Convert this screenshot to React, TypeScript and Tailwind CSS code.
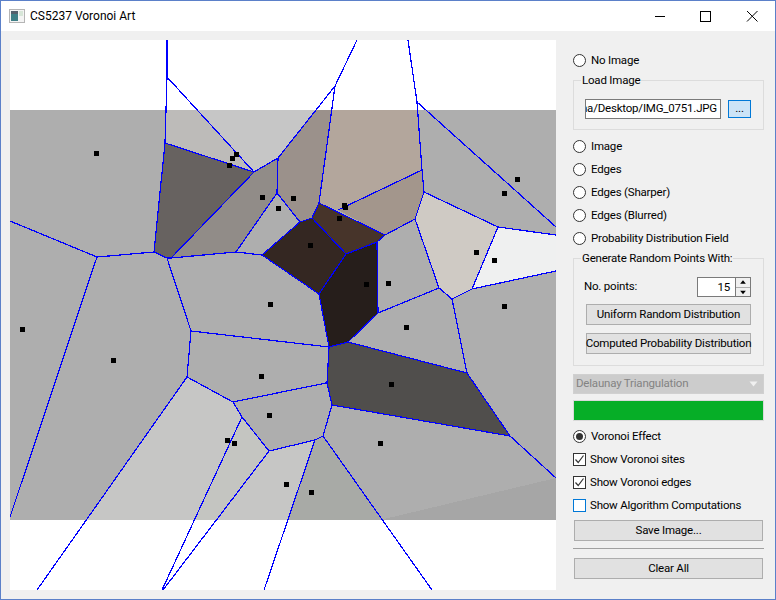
import React from 'react';

// All canvas coordinates are in window pixels; the svg viewBox is offset to match.
type Cell = { fill: string; pts: string };

const cells: Cell[] = [
  { fill: '#bdbbb9', pts: '167,77 165,143 254,172' },
  { fill: '#c6c6c6', pts: '167,77 254,172 278,158 335,86 335,40 167,40' },
  { fill: '#676260', pts: '165,143 254,172 171,258 167,258 154,252' },
  { fill: '#918c88', pts: '254,172 278,158 277,193 236,252 171,258' },
  { fill: '#9b918b', pts: '335,86 278,158 277,193 300,222 312,218 319,203' },
  { fill: '#b3a69c', pts: '335,86 417,102 422,170 338,210 319,203' },
  { fill: '#a3968c', pts: '338,210 422,170 424,192 415,219 385,235' },
  { fill: '#47342a', pts: '319,203 385,235 377,242 346,254 312,218' },
  { fill: '#342722', pts: '300,222 312,218 346,254 319,294 262,255' },
  { fill: '#261e1b', pts: '346,254 377,242 378,313 348,342 329,347 319,294' },
  { fill: '#cfcac4', pts: '424,192 498,227 472,289 452,299 439,288 415,219' },
  { fill: '#eff0f0', pts: '498,227 556,235 556,271 472,289' },
  { fill: '#504e4c', pts: '329,347 348,342 467,373 510,436 332,405 327,383' },
  { fill: '#c6c6c5', pts: '187,377 233,402 242,417 162,590 37,590' },
  { fill: '#c4c5c1', pts: '242,417 269,451 163,590 162,590' },
  { fill: '#c6c6c5', pts: '269,451 315,440 264,590 163,590' },
  { fill: '#a8aaa6', pts: '315,440 323,436 432,590 264,590' },
  { fill: '#a6a6a6', pts: '556,478 556,520 380,520' },
];

const edges: string[] = [
  '167,40 167,77 165,143 154,252 167,258 171,258 236,252 262,255',
  '167,77 254,172 278,158 335,86 357,40',
  '165,143 254,172 171,258',
  '278,158 277,193 236,252',
  '277,193 300,222 312,218 319,203 335,86',
  '408,40 417,102 422,170 424,192 415,219 385,235 377,242 378,313 348,342 329,347 319,294 262,255 300,222',
  '319,203 385,235',
  '338,210 422,170',
  '312,218 346,254 377,242',
  '346,254 319,294',
  '154,252 97,257 10,221',
  '97,257 10,517',
  '167,258 191,331 187,377 233,402 242,417 269,451 315,440 323,436',
  '191,331 329,347 348,342 467,373 510,436 332,405 327,383 329,347',
  '233,402 326,383',
  '187,377 37,590',
  '242,417 162,590',
  '269,451 163,590',
  '315,440 264,590',
  '323,436 332,405',
  '323,436 432,590',
  '510,436 556,478',
  '378,313 439,288 452,299 472,289 498,227 424,192',
  '415,219 439,288',
  '452,299 467,373',
  '472,289 556,271',
  '498,227 556,235',
  '417,102 556,227',
];

const sites: [number, number][] = [
  [96, 153], [236, 154], [232, 158], [229, 165], [262, 197], [278, 208], [293, 198],
  [344, 205], [345, 207], [339, 218], [310, 245], [366, 284], [388, 283], [406, 327],
  [476, 252], [494, 260], [504, 193], [517, 179], [504, 306], [22, 329], [113, 360],
  [261, 376], [269, 415], [227, 440], [234, 443], [270, 304], [391, 384], [380, 443],
  [286, 484], [311, 492],
];

const VoronoiCanvas = () => (
  <svg viewBox="10 40 546 550" className="block w-[546px] h-[550px] shrink-0 bg-white" shapeRendering="crispEdges">
    <defs>
      <clipPath id="photo">
        <rect x="10" y="110" width="546" height="410" />
      </clipPath>
    </defs>
    <g clipPath="url(#photo)">
      <rect x="10" y="110" width="546" height="410" fill="#aeaeae" />
      {cells.map((c, i) => (
        <polygon key={i} points={c.pts} fill={c.fill} />
      ))}
    </g>
    {edges.map((pts, i) => (
      <polyline key={i} points={pts} fill="none" stroke="#0000ff" strokeWidth="1.2" />
    ))}
    {sites.map(([x, y], i) => (
      <rect key={i} x={x - 2.5} y={y - 2.5} width="5" height="5" fill="#000" />
    ))}
  </svg>
);

const Radio = ({ label, checked }: { label: string; checked?: boolean }) => (
  <div className="h-[23px] flex items-center shrink-0">
    <span className="w-[13px] h-[13px] rounded-full border border-[#333] bg-white flex items-center justify-center">
      {checked && <span className="w-[7px] h-[7px] rounded-full bg-[#333]" />}
    </span>
    <span className="ml-[5px]">{label}</span>
  </div>
);

const Check = ({ label, checked, focus }: { label: string; checked?: boolean; focus?: boolean }) => (
  <div className="h-[23px] flex items-center shrink-0">
    <span className={`w-[13px] h-[13px] border bg-white flex items-center justify-center ${focus ? 'border-[#0078d7]' : 'border-[#333]'}`}>
      {checked && (
        <svg width="11" height="11" viewBox="0 0 11 11">
          <path d="M1.5 5.5 L4.2 8.5 L9.5 1.5" fill="none" stroke="#333" strokeWidth="1.2" />
        </svg>
      )}
    </span>
    <span className="ml-[4px]">{label}</span>
  </div>
);

const PushButton = ({ label, className }: { label: string; className?: string }) => (
  <button className={`h-[21px] border border-[#adadad] bg-[#e1e1e1] flex items-center justify-center whitespace-nowrap ${className ?? ''}`}>
    {label}
  </button>
);

const GroupBox = ({ title, className, children }: { title: string; className?: string; children: React.ReactNode }) => (
  <div className={`relative border border-[#dcdcdc] shrink-0 ${className ?? ''}`}>
    <span className="absolute left-[7px] top-[-8px] px-[1px] leading-[15px] bg-[#f0f0f0] whitespace-nowrap">{title}</span>
    {children}
  </div>
);

export default function App() {
  return (
    <div
      className="w-[776px] h-[600px] border border-[#5b80c9] bg-[#f0f0f0] flex flex-col overflow-hidden text-[11.5px] tracking-[-0.2px] text-black"
      style={{ fontFamily: 'Roboto, "Liberation Sans", sans-serif' }}
    >
      {/* title bar */}
      <div className="h-[30px] bg-white flex items-center shrink-0">
        <svg width="16" height="16" viewBox="0 0 16 16" className="ml-[8px]">
          <rect x="0.5" y="1.5" width="15" height="13" fill="#f4f4f4" stroke="#b5b5b5" />
          <rect x="2" y="3" width="7" height="10" fill="#3f7f86" />
          <rect x="2" y="3" width="7" height="3" fill="#54606c" />
          <rect x="10" y="3" width="4" height="5" fill="#d7e6d8" />
        </svg>
        <span className="ml-[5px] text-[12px] tracking-normal">CS5237 Voronoi Art</span>
        <div className="ml-auto flex items-center">
          <svg width="46" height="30" viewBox="0 0 46 30">
            <path d="M17.5 15.5 H28" stroke="#000" fill="none" shapeRendering="crispEdges" />
          </svg>
          <svg width="46" height="30" viewBox="0 0 46 30">
            <rect x="17.5" y="10.5" width="10" height="10" stroke="#000" fill="none" shapeRendering="crispEdges" />
          </svg>
          <svg width="46" height="30" viewBox="0 0 46 30">
            <path d="M18 10 L28.5 20.5 M28.5 10 L18 20.5" stroke="#000" fill="none" />
          </svg>
        </div>
      </div>

      <div className="flex flex-1 pl-[9px] pt-[9px]">
        <VoronoiCanvas />

        <div className="ml-[17px] w-[191px] flex flex-col">
          <div className="mt-[9px]">
            <Radio label="No Image" />
          </div>

          <GroupBox title="Load Image" className="mt-[8px] h-[50px] pl-[11px] pt-[18px] flex items-start">
            <div className="w-[136px] h-[20px] border border-[#7a7a7a] bg-white flex items-center justify-end overflow-hidden pr-[3px]">
              <span className="whitespace-nowrap">ha/Desktop/IMG_0751.JPG</span>
            </div>
            <button className="ml-[7px] mt-[1px] w-[23px] h-[18px] border border-[#0078d7] bg-[#cce4f7] flex items-center justify-center leading-none">
              ...
            </button>
          </GroupBox>

          <div className="mt-[5px] flex flex-col">
            <Radio label="Image" />
            <Radio label="Edges" />
            <Radio label="Edges (Sharper)" />
            <Radio label="Edges (Blurred)" />
            <Radio label="Probability Distribution Field" />
          </div>

          <GroupBox title="Generate Random Points With:" className="mt-[8px] h-[108px] flex flex-col pl-[12px] pr-[12px] pt-[18px]">
            <div className="h-[20px] flex items-center justify-between">
              <span className="-ml-[2px]">No. points:</span>
              <div className="w-[54px] h-[20px] border border-[#7a7a7a] bg-white flex items-stretch">
                <span className="flex-1 text-right pr-[5px] leading-[19px]">15</span>
                <div className="w-[15px] bg-[#f0f0f0] flex flex-col border-l border-[#7a7a7a]">
                  <svg width="14" height="9" viewBox="0 0 14 9" className="border-b border-[#adadad] box-content">
                    <path d="M7 2.5 L10 6 H4 Z" fill="#000" />
                  </svg>
                  <svg width="14" height="9" viewBox="0 0 14 9">
                    <path d="M7 6.5 L10 3 H4 Z" fill="#000" />
                  </svg>
                </div>
              </div>
            </div>
            <PushButton label="Uniform Random Distribution" className="mt-[7px] w-[165px]" />
            <PushButton label="Computed Probability Distribution" className="mt-[8px] w-[165px]" />
          </GroupBox>

          <div className="mt-[8px] h-[20px] bg-[#cccccc] border border-[#d0d0d0] text-[#838383] flex items-center justify-between pl-[2px] pr-[5px] shrink-0">
            <span>Delaunay Triangulation</span>
            <svg width="9" height="6" viewBox="0 0 9 6">
              <path d="M0.5 0.5 H8.5 L4.5 5.5 Z" fill="#f0f0f0" />
            </svg>
          </div>

          <div className="mt-[6px] h-[21px] bg-[#06ae27] border border-[#d9d9d9] shrink-0" />

          <div className="mt-[4px] flex flex-col">
            <Radio label="Voronoi Effect" checked />
            <Check label="Show Voronoi sites" checked />
            <Check label="Show Voronoi edges" checked />
            <Check label="Show Algorithm Computations" focus />
          </div>

          <PushButton label="Save Image..." className="mt-[3px] ml-[1px] w-[189px] shrink-0" />
          <div className="mt-[7px] h-px bg-[#a0a0a0] shrink-0" />
          <PushButton label="Clear All" className="mt-[9px] ml-[1px] w-[189px] shrink-0" />
        </div>
      </div>
    </div>
  );
}
